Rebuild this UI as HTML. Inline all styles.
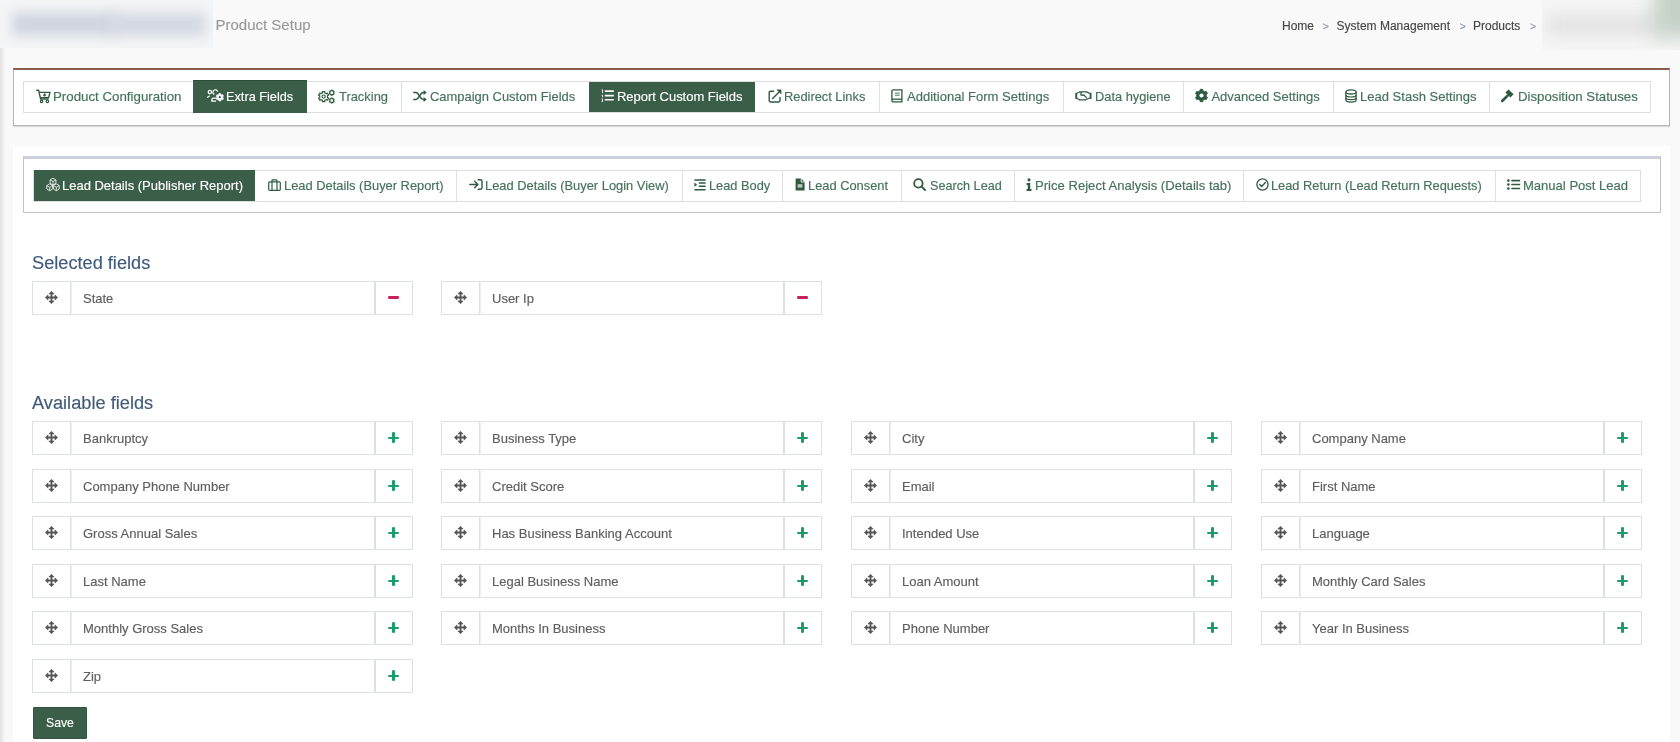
<!DOCTYPE html>
<html><head><meta charset="utf-8"><title>Product Setup</title>
<style>
html,body{margin:0;padding:0}
body{width:1680px;height:742px;overflow:hidden;position:relative;background:#f9f9f9;font-family:"Liberation Sans",sans-serif}
.t{position:absolute;white-space:nowrap;line-height:20px;-webkit-text-stroke:0.15px currentColor}
svg{overflow:visible}
</style></head><body>
<div id="root" style="position:absolute;left:0;top:0;width:1680px;height:742px;filter:blur(0.35px)">
<div style="position:absolute;left:0;top:0;width:6px;height:742px;background:linear-gradient(90deg,#e2e2e2 0,#e6e6e6 1.5px,#f2f2f2 3.5px,#f9f9f9 6px)"></div>
<div style="position:absolute;left:0;top:0;width:213px;height:48px;background:#f4f5f7;overflow:hidden"><div style="position:absolute;left:12px;top:12px;width:106px;height:24px;background:#d1d6de;filter:blur(6px)"></div><div style="position:absolute;left:112px;top:13px;width:94px;height:23px;background:#d4d9e1;filter:blur(6px)"></div></div>
<div class="t" style="left:215.5px;top:15.00px;font-size:15px;color:#9a9a9a;">Product Setup</div>
<div class="t" style="left:1282px;top:16.00px;font-size:12px;color:#474747;">Home</div>
<div class="t" style="left:1336.6px;top:16.00px;font-size:12px;color:#474747;">System Management</div>
<div class="t" style="left:1473px;top:16.00px;font-size:12px;color:#474747;">Products</div>
<div class="t" style="left:1322.8px;top:15.50px;font-size:10.5px;color:#8d9bb3;">&gt;</div>
<div class="t" style="left:1459.8px;top:15.50px;font-size:10.5px;color:#8d9bb3;">&gt;</div>
<div class="t" style="left:1530.1px;top:15.50px;font-size:10.5px;color:#8d9bb3;">&gt;</div>
<div style="position:absolute;left:1542px;top:0;width:138px;height:50px;background:#f6f6f6;overflow:hidden"><div style="position:absolute;left:4px;top:14px;width:118px;height:22px;background:#e3e3e3;filter:blur(8px)"></div><div style="position:absolute;left:112px;top:-25px;width:60px;height:62px;background:#c3d0c5;filter:blur(10px)"></div></div>
<div style="position:absolute;left:13px;top:68px;width:1655px;height:55px;background:#fff;border:1px solid #b7b7b7;border-top:2px solid #8c5b50;box-shadow:0 1px 1px rgba(0,0,0,0.12)"></div>
<div style="position:absolute;left:23px;top:81px;width:1626px;height:30px;border:1px solid #dedede;background:#fff"></div>
<div style="position:absolute;left:401px;top:82px;width:1px;height:30px;background:#e0e0e0"></div>
<div style="position:absolute;left:879px;top:82px;width:1px;height:30px;background:#e0e0e0"></div>
<div style="position:absolute;left:1063px;top:82px;width:1px;height:30px;background:#e0e0e0"></div>
<div style="position:absolute;left:1183px;top:82px;width:1px;height:30px;background:#e0e0e0"></div>
<div style="position:absolute;left:1333px;top:82px;width:1px;height:30px;background:#e0e0e0"></div>
<div style="position:absolute;left:1489px;top:82px;width:1px;height:30px;background:#e0e0e0"></div>
<div style="position:absolute;left:193px;top:80px;width:114px;height:33px;background:#3a5e48;box-shadow:inset 0 1px 0 #2c4f3a"></div>
<div style="position:absolute;left:589px;top:82px;width:166px;height:30px;background:#3a5e48"></div>
<svg style="position:absolute;left:36.2px;top:88.8px" width="15" height="14" viewBox="0 0 15 14" fill="none" stroke="none" color="#2f5a40"><path d="M0.8 1.2 H2.6 L4.6 10 H12.2" stroke="#2f5a40" stroke-width="1.4" stroke-linecap="round" stroke-linejoin="round"/><path d="M3.4 3.4 H14 L12.6 8.6 H4.5" stroke="#2f5a40" stroke-width="1.4" stroke-linejoin="round"/><circle cx="5.6" cy="12.4" r="1.2" stroke="#2f5a40" stroke-width="1.2"/><circle cx="11.4" cy="12.4" r="1.2" stroke="#2f5a40" stroke-width="1.2"/><path d="M8.6 4.6 V7.6 M7.1 6.1 H10.1" stroke="#2f5a40" stroke-width="1.3"/></svg>
<div class="t" style="left:53.4px;top:86.70px;font-size:13px;color:#44715a;transform:scaleX(1.022);transform-origin:0 0;">Product Configuration</div>
<svg style="position:absolute;left:206.5px;top:89.3px" width="17" height="13" viewBox="0 0 17 13" fill="none" stroke="none" color="#2f5a40"><circle cx="2.9" cy="3" r="1.7" stroke="#ffffff" stroke-width="1.2"/><path d="M7.4 5.4 A2.4 2.4 0 1 1 10.6 2.6" stroke="#ffffff" stroke-width="1.2"/><path d="M0.5 8.4 Q1.3 7.3 2.6 7" stroke="#ffffff" stroke-width="1.2" stroke-linecap="round"/><path d="M9 9.2 H6.4 Q4.9 9.2 4.9 10.7 V12.2 H9" stroke="#ffffff" stroke-width="1.3"/><path d="M11.35 5.69 L11.87 5.45 L11.79 4.43 L13.81 4.43 L13.73 5.45 L14.25 5.69 L14.71 6.02 L15.56 5.44 L16.57 7.19 L15.64 7.63 L15.70 8.20 L15.64 8.77 L16.57 9.21 L15.56 10.96 L14.71 10.38 L14.25 10.71 L13.73 10.95 L13.81 11.97 L11.79 11.97 L11.87 10.95 L11.35 10.71 L10.89 10.38 L10.04 10.96 L9.03 9.21 L9.96 8.77 L9.90 8.20 L9.96 7.63 L9.03 7.19 L10.04 5.44 L10.89 6.02 Z" fill="#ffffff" stroke="#ffffff" stroke-width="0.6" stroke-linejoin="round"/><circle cx="12.8" cy="8.2" r="1.1" fill="#3a5e48"/></svg>
<div class="t" style="left:226.0px;top:86.70px;font-size:13px;color:#fff;transform:scaleX(0.979);transform-origin:0 0;">Extra Fields</div>
<svg style="position:absolute;left:318.3px;top:89.6px" width="17" height="13" viewBox="0 0 17 13" fill="none" stroke="none" color="#2f5a40"><path d="M3.65 3.22 L4.47 2.87 L4.39 1.54 L6.81 1.54 L6.73 2.87 L7.55 3.22 L8.27 3.75 L9.37 3.02 L10.59 5.12 L9.40 5.71 L9.50 6.60 L9.40 7.49 L10.59 8.08 L9.37 10.18 L8.27 9.45 L7.55 9.98 L6.73 10.33 L6.81 11.66 L4.39 11.66 L4.47 10.33 L3.65 9.98 L2.93 9.45 L1.83 10.18 L0.61 8.08 L1.80 7.49 L1.70 6.60 L1.80 5.71 L0.61 5.12 L1.83 3.02 L2.93 3.75 Z" stroke="#2f5a40" stroke-width="1.2" stroke-linejoin="round"/><circle cx="5.6" cy="6.6" r="1.6" stroke="#2f5a40" stroke-width="1.1"/><path d="M12.85 1.05 L13.19 0.90 L13.15 0.29 L14.45 0.29 L14.41 0.90 L14.75 1.05 L15.05 1.27 L15.57 0.93 L16.21 2.05 L15.66 2.33 L15.70 2.70 L15.66 3.07 L16.21 3.35 L15.57 4.47 L15.05 4.13 L14.75 4.35 L14.41 4.50 L14.45 5.11 L13.15 5.11 L13.19 4.50 L12.85 4.35 L12.55 4.13 L12.03 4.47 L11.39 3.35 L11.94 3.07 L11.90 2.70 L11.94 2.33 L11.39 2.05 L12.03 0.93 L12.55 1.27 Z" stroke="#2f5a40" stroke-width="1.1" stroke-linejoin="round"/><path d="M12.85 8.85 L13.19 8.70 L13.15 8.09 L14.45 8.09 L14.41 8.70 L14.75 8.85 L15.05 9.07 L15.57 8.73 L16.21 9.85 L15.66 10.13 L15.70 10.50 L15.66 10.87 L16.21 11.15 L15.57 12.27 L15.05 11.93 L14.75 12.15 L14.41 12.30 L14.45 12.91 L13.15 12.91 L13.19 12.30 L12.85 12.15 L12.55 11.93 L12.03 12.27 L11.39 11.15 L11.94 10.87 L11.90 10.50 L11.94 10.13 L11.39 9.85 L12.03 8.73 L12.55 9.07 Z" stroke="#2f5a40" stroke-width="1.1" stroke-linejoin="round"/></svg>
<div class="t" style="left:338.6px;top:86.70px;font-size:13px;color:#44715a;transform:scaleX(0.992);transform-origin:0 0;">Tracking</div>
<svg style="position:absolute;left:412.6px;top:89.8px" width="14" height="12" viewBox="0 0 14 12" fill="none" stroke="none" color="#2f5a40"><path d="M0.8 2.5 H2.8 Q4.4 2.5 5.6 4.6 L7.4 7.4 Q8.6 9.4 10.6 9.4 H11.5" stroke="#2f5a40" stroke-width="1.5" stroke-linecap="round"/><path d="M0.8 9.4 H2.8 Q4.4 9.4 5.6 7.4 L7.4 4.6 Q8.6 2.5 10.6 2.5 H11.5" stroke="#2f5a40" stroke-width="1.5" stroke-linecap="round"/><path d="M10.6 0 L13.8 2.5 L10.6 5 Z M10.6 6.9 L13.8 9.4 L10.6 11.9 Z" fill="#2f5a40"/></svg>
<div class="t" style="left:429.7px;top:86.70px;font-size:13px;color:#44715a;transform:scaleX(0.995);transform-origin:0 0;">Campaign Custom Fields</div>
<svg style="position:absolute;left:601px;top:89.2px" width="13" height="13" viewBox="0 0 13 13" fill="none" stroke="none" color="#2f5a40"><path d="M0.6 0.8 H1.6 V4.2 M0.6 6.2 H1.6 V8.3 M0.6 10 H1.6 V12.6 H0.6" stroke="#ffffff" stroke-width="0.9"/><path d="M3.8 2.1 H12.8 M3.8 6.6 H12.8 M3.8 10.8 H12.8" stroke="#ffffff" stroke-width="1.6"/></svg>
<div class="t" style="left:616.5px;top:86.70px;font-size:13px;color:#fff;transform:scaleX(0.998);transform-origin:0 0;">Report Custom Fields</div>
<svg style="position:absolute;left:767.5px;top:88.8px" width="14" height="14" viewBox="0 0 14 14" fill="none" stroke="none" color="#2f5a40"><path d="M5.6 2.2 H2.6 Q1.2 2.2 1.2 3.6 V11.6 Q1.2 13 2.6 13 H10.6 Q12 13 12 11.6 V8.4" stroke="#2f5a40" stroke-width="1.4" stroke-linecap="round"/><path d="M4.6 9.4 L11.6 2.4" stroke="#2f5a40" stroke-width="1.4" stroke-linecap="round"/><path d="M8.4 0.6 H13.4 V5.6 Z" fill="#2f5a40"/></svg>
<div class="t" style="left:784.1px;top:86.70px;font-size:13px;color:#44715a;transform:scaleX(0.987);transform-origin:0 0;">Redirect Links</div>
<svg style="position:absolute;left:891.3px;top:88.9px" width="12" height="14" viewBox="0 0 12 14" fill="none" stroke="none" color="#2f5a40"><path d="M2.2 0.9 H10.9 V12.9 H2.2 Q0.9 12.9 0.9 11.6 V2.2 Q0.9 0.9 2.2 0.9 Z" stroke="#2f5a40" stroke-width="1.3"/><path d="M0.9 10.2 H10.9" stroke="#2f5a40" stroke-width="1.3"/><path d="M3.9 4.1 H8.7 M3.9 6.2 H8.7" stroke="#2f5a40" stroke-width="0.85"/></svg>
<div class="t" style="left:907.1px;top:86.70px;font-size:13px;color:#44715a;transform:scaleX(1.004);transform-origin:0 0;">Additional Form Settings</div>
<svg style="position:absolute;left:1074.6px;top:90.8px" width="17" height="10" viewBox="0 0 17 10" fill="none" stroke="none" color="#2f5a40"><path d="M0.3 1.8 H2.2 V8 H0.3 Z M14.6 1.8 H16.5 V8 H14.6 Z" fill="#2f5a40"/><path d="M2.2 2.3 L4.8 0.8 H11.6 L14.6 2.3 M2.2 7.5 L4.6 8.9 H10.2 L14.6 7" stroke="#2f5a40" stroke-width="1.3" stroke-linejoin="round"/><path d="M6.2 1 L5.9 3.9 Q7.2 4.6 8.6 3.8 L11.8 6.9" stroke="#2f5a40" stroke-width="1.3" stroke-linejoin="round"/></svg>
<div class="t" style="left:1094.6px;top:86.70px;font-size:13px;color:#44715a;transform:scaleX(0.987);transform-origin:0 0;">Data hygiene</div>
<svg style="position:absolute;left:1195.2px;top:89.3px" width="13" height="13" viewBox="0 0 13 13" fill="none" stroke="none" color="#2f5a40"><path d="M4.05 2.26 L5.17 1.78 L5.13 0.35 L7.87 0.35 L7.83 1.78 L8.95 2.26 L9.92 2.99 L11.14 2.24 L12.51 4.62 L11.25 5.29 L11.40 6.50 L11.25 7.71 L12.51 8.38 L11.14 10.76 L9.92 10.01 L8.95 10.74 L7.83 11.22 L7.87 12.65 L5.13 12.65 L5.17 11.22 L4.05 10.74 L3.08 10.01 L1.86 10.76 L0.49 8.38 L1.75 7.71 L1.60 6.50 L1.75 5.29 L0.49 4.62 L1.86 2.24 L3.08 2.99 Z" fill="#2f5a40" stroke="#2f5a40" stroke-width="0.9" stroke-linejoin="round"/><circle cx="6.5" cy="6.5" r="2.1" fill="#fff"/></svg>
<div class="t" style="left:1211.4px;top:86.70px;font-size:13px;color:#44715a;">Advanced Settings</div>
<svg style="position:absolute;left:1345.2px;top:88.9px" width="12" height="14" viewBox="0 0 12 14" fill="none" stroke="none" color="#2f5a40"><ellipse cx="6" cy="2.9" rx="5.1" ry="2.1" stroke="#2f5a40" stroke-width="1.3"/><path d="M0.9 2.9 V11 Q0.9 13.1 6 13.1 Q11.1 13.1 11.1 11 V2.9" stroke="#2f5a40" stroke-width="1.3"/><path d="M0.9 6 Q0.9 8 6 8 Q11.1 8 11.1 6 M0.9 8.7 Q0.9 10.6 6 10.6 Q11.1 10.6 11.1 8.7" stroke="#2f5a40" stroke-width="1.2"/></svg>
<div class="t" style="left:1359.6px;top:86.70px;font-size:13px;color:#44715a;transform:scaleX(1.002);transform-origin:0 0;">Lead Stash Settings</div>
<svg style="position:absolute;left:1501.3px;top:89.2px" width="13" height="13" viewBox="0 0 13 13" fill="none" stroke="none" color="#2f5a40"><path d="M4.4 3.6 L7.6 0.4 L9.6 2.4 L12.6 5.3 L9.4 8.6 L6.4 5.6 Z" fill="#2f5a40"/><path d="M1.2 12 L6.6 6.6" stroke="#2f5a40" stroke-width="2.6" stroke-linecap="round"/></svg>
<div class="t" style="left:1517.6px;top:86.70px;font-size:13px;color:#44715a;transform:scaleX(1.017);transform-origin:0 0;">Disposition Statuses</div>
<div style="position:absolute;left:13px;top:146px;width:1657px;height:596px;background:#fff"></div>
<div style="position:absolute;left:23px;top:156px;width:1636px;height:53px;background:#fff;border:1px solid #c3c3c3;border-top:3px solid #cbd2dd"></div>
<div style="position:absolute;left:33px;top:170px;width:1606px;height:30px;border:1px solid #dedede;background:#fff"></div>
<div style="position:absolute;left:456px;top:171px;width:1px;height:30px;background:#e0e0e0"></div>
<div style="position:absolute;left:682px;top:171px;width:1px;height:30px;background:#e0e0e0"></div>
<div style="position:absolute;left:782px;top:171px;width:1px;height:30px;background:#e0e0e0"></div>
<div style="position:absolute;left:901px;top:171px;width:1px;height:30px;background:#e0e0e0"></div>
<div style="position:absolute;left:1014px;top:171px;width:1px;height:30px;background:#e0e0e0"></div>
<div style="position:absolute;left:1243px;top:171px;width:1px;height:30px;background:#e0e0e0"></div>
<div style="position:absolute;left:1495px;top:171px;width:1px;height:30px;background:#e0e0e0"></div>
<div style="position:absolute;left:34px;top:170px;width:221px;height:31px;background:#3a5e48"></div>
<svg style="position:absolute;left:45.6px;top:178px" width="14" height="13" viewBox="0 0 14 13" fill="none" stroke="none" color="#2f5a40"><path d="M7 0.20000000000000018 L9.94 1.90 L9.94 5.30 L7 7.0 L4.06 5.30 L4.06 1.90 Z M4.06 1.90 L7 3.6 L9.94 1.90 M7 3.6 V7.0" stroke="#ffffff" stroke-width="0.8" stroke-linejoin="round"/><path d="M3.7 5.9 L6.64 7.60 L6.64 11.00 L3.7 12.700000000000001 L0.76 11.00 L0.76 7.60 Z M0.76 7.60 L3.7 9.3 L6.64 7.60 M3.7 9.3 V12.700000000000001" stroke="#ffffff" stroke-width="0.8" stroke-linejoin="round"/><path d="M10.3 5.9 L13.24 7.60 L13.24 11.00 L10.3 12.700000000000001 L7.36 11.00 L7.36 7.60 Z M7.36 7.60 L10.3 9.3 L13.24 7.60 M10.3 9.3 V12.700000000000001" stroke="#ffffff" stroke-width="0.8" stroke-linejoin="round"/></svg>
<div class="t" style="left:61.7px;top:175.80px;font-size:13px;color:#fff;transform:scaleX(0.998);transform-origin:0 0;">Lead Details (Publisher Report)</div>
<svg style="position:absolute;left:268px;top:178.6px" width="13" height="12" viewBox="0 0 13 12" fill="none" stroke="none" color="#2f5a40"><rect x="0.7" y="2.9" width="11.6" height="8.5" rx="1.2" stroke="#2f5a40" stroke-width="1.2"/><path d="M4 11.4 V1.6 Q4 0.8 4.8 0.8 H8.2 Q9 0.8 9 1.6 V11.4" stroke="#2f5a40" stroke-width="1.2"/></svg>
<div class="t" style="left:284.4px;top:175.80px;font-size:13px;color:#44715a;transform:scaleX(0.99);transform-origin:0 0;">Lead Details (Buyer Report)</div>
<svg style="position:absolute;left:468.5px;top:178.9px" width="14" height="11" viewBox="0 0 14 11" fill="none" stroke="none" color="#2f5a40"><path d="M0.8 5.5 H8.6 M5.6 2.2 L8.9 5.5 L5.6 8.8" stroke="#2f5a40" stroke-width="1.4" stroke-linecap="round" stroke-linejoin="round"/><path d="M9.2 0.8 H11.6 Q13 0.8 13 2.2 V8.8 Q13 10.2 11.6 10.2 H9.2" stroke="#2f5a40" stroke-width="1.4" stroke-linecap="round"/></svg>
<div class="t" style="left:485.0px;top:175.80px;font-size:13px;color:#44715a;transform:scaleX(0.991);transform-origin:0 0;">Lead Details (Buyer Login View)</div>
<svg style="position:absolute;left:693.9px;top:178.7px" width="12" height="12" viewBox="0 0 12 12" fill="none" stroke="none" color="#2f5a40"><path d="M0.4 1 H11.6 M4.8 4.1 H11.6 M4.8 7.2 H11.6 M0.4 10.8 H11.6" stroke="#2f5a40" stroke-width="1.5"/><path d="M0.4 3.6 L3.2 5.7 L0.4 7.8 Z" fill="#2f5a40"/></svg>
<div class="t" style="left:708.5px;top:175.80px;font-size:13px;color:#44715a;transform:scaleX(0.984);transform-origin:0 0;">Lead Body</div>
<svg style="position:absolute;left:794.7px;top:178px" width="10" height="13" viewBox="0 0 10 13" fill="none" stroke="none" color="#2f5a40"><path d="M0.6 0.6 H6.2 L9.6 4 V12.6 H0.6 Z" fill="#2f5a40"/><path d="M6.2 0.6 V4 H9.6" stroke="#fff" stroke-width="0.9"/><rect x="2.6" y="6.2" width="4.8" height="3.4" fill="#b9c9bf"/></svg>
<div class="t" style="left:807.7px;top:175.80px;font-size:13px;color:#44715a;transform:scaleX(0.988);transform-origin:0 0;">Lead Consent</div>
<svg style="position:absolute;left:913.3px;top:178px" width="13" height="13" viewBox="0 0 13 13" fill="none" stroke="none" color="#2f5a40"><circle cx="5.4" cy="5.4" r="4.2" stroke="#2f5a40" stroke-width="1.8"/><path d="M8.4 8.4 L12 12" stroke="#2f5a40" stroke-width="1.9" stroke-linecap="round"/></svg>
<div class="t" style="left:929.6px;top:175.80px;font-size:13px;color:#44715a;transform:scaleX(0.973);transform-origin:0 0;">Search Lead</div>
<svg style="position:absolute;left:1026.4px;top:177.8px" width="6" height="13" viewBox="0 0 6 13" fill="none" stroke="none" color="#2f5a40"><circle cx="3" cy="1.8" r="1.6" fill="#2f5a40"/><path d="M0.6 5 H4.2 V11 H5.4 V13 H0.6 V11 H1.8 V7 H0.6 Z" fill="#2f5a40"/></svg>
<div class="t" style="left:1034.9px;top:175.80px;font-size:13px;color:#44715a;transform:scaleX(1.007);transform-origin:0 0;">Price Reject Analysis (Details tab)</div>
<svg style="position:absolute;left:1255.8px;top:178px" width="13" height="13" viewBox="0 0 13 13" fill="none" stroke="none" color="#2f5a40"><circle cx="6.5" cy="6.5" r="5.6" stroke="#2f5a40" stroke-width="1.3"/><path d="M3.7 6.6 L5.6 8.5 L9.4 4.6" stroke="#2f5a40" stroke-width="1.4" stroke-linecap="round" stroke-linejoin="round"/></svg>
<div class="t" style="left:1271.4px;top:175.80px;font-size:13px;color:#44715a;transform:scaleX(0.985);transform-origin:0 0;">Lead Return (Lead Return Requests)</div>
<svg style="position:absolute;left:1506.7px;top:178.9px" width="13" height="11" viewBox="0 0 13 11" fill="none" stroke="none" color="#2f5a40"><circle cx="1.4" cy="1.6" r="1.3" fill="#2f5a40"/><circle cx="1.4" cy="5.5" r="1.3" fill="#2f5a40"/><circle cx="1.4" cy="9.5" r="1.3" fill="#2f5a40"/><path d="M5 1.6 H12.4 M5 5.5 H12.4 M5 9.5 H12.4" stroke="#2f5a40" stroke-width="1.7" stroke-linecap="round"/></svg>
<div class="t" style="left:1522.9px;top:175.80px;font-size:13px;color:#44715a;transform:scaleX(1.003);transform-origin:0 0;">Manual Post Lead</div>
<div class="t" style="left:32.4px;top:253.00px;font-size:18px;color:#3f5a7c;transform:scaleX(1.01);transform-origin:0 0;">Selected fields</div>
<div class="t" style="left:32.4px;top:392.80px;font-size:18px;color:#3f5a7c;transform:scaleX(1.012);transform-origin:0 0;">Available fields</div>
<div style="position:absolute;left:32px;top:281px;width:379px;height:32px;border:1px solid #dcdfe6;background:#fff"></div>
<div style="position:absolute;left:70px;top:281px;width:1px;height:34px;background:#dcdfe6"></div>
<div style="position:absolute;left:71px;top:281px;width:1px;height:34px;background:#eceef2"></div>
<div style="position:absolute;left:374px;top:281px;width:1px;height:34px;background:#dcdfe6"></div>
<div style="position:absolute;left:375px;top:281px;width:1px;height:34px;background:#dcdfe6"></div>
<svg style="position:absolute;left:45px;top:291px" width="13" height="13" viewBox="0 0 13 13" fill="none" stroke="none" color="#2f5a40"><path d="M6.5 0.3 L9.1 3 H3.9 Z M6.5 12.7 L9.1 10 H3.9 Z M0.3 6.5 L3 3.9 V9.1 Z M12.7 6.5 L10 3.9 V9.1 Z" fill="#555555" stroke="#555555" stroke-width="0.6" stroke-linejoin="round"/><path d="M6.5 2.5 V10.5 M2.5 6.5 H10.5" stroke="#555555" stroke-width="1.8"/></svg>
<div class="t" style="left:83px;top:289.40px;font-size:13px;color:#5e5e5e;">State</div>
<div style="position:absolute;left:387.6px;top:296.3px;width:11.6px;height:2.6px;background:#c8215e;border-radius:1.3px"></div>
<div style="position:absolute;left:441px;top:281px;width:379px;height:32px;border:1px solid #dcdfe6;background:#fff"></div>
<div style="position:absolute;left:479px;top:281px;width:1px;height:34px;background:#dcdfe6"></div>
<div style="position:absolute;left:480px;top:281px;width:1px;height:34px;background:#eceef2"></div>
<div style="position:absolute;left:783px;top:281px;width:1px;height:34px;background:#dcdfe6"></div>
<div style="position:absolute;left:784px;top:281px;width:1px;height:34px;background:#dcdfe6"></div>
<svg style="position:absolute;left:454px;top:291px" width="13" height="13" viewBox="0 0 13 13" fill="none" stroke="none" color="#2f5a40"><path d="M6.5 0.3 L9.1 3 H3.9 Z M6.5 12.7 L9.1 10 H3.9 Z M0.3 6.5 L3 3.9 V9.1 Z M12.7 6.5 L10 3.9 V9.1 Z" fill="#555555" stroke="#555555" stroke-width="0.6" stroke-linejoin="round"/><path d="M6.5 2.5 V10.5 M2.5 6.5 H10.5" stroke="#555555" stroke-width="1.8"/></svg>
<div class="t" style="left:492px;top:289.40px;font-size:13px;color:#5e5e5e;">User Ip</div>
<div style="position:absolute;left:796.6px;top:296.3px;width:11.6px;height:2.6px;background:#c8215e;border-radius:1.3px"></div>
<div style="position:absolute;left:32px;top:421px;width:379px;height:32px;border:1px solid #dcdfe6;background:#fff"></div>
<div style="position:absolute;left:70px;top:421px;width:1px;height:34px;background:#dcdfe6"></div>
<div style="position:absolute;left:71px;top:421px;width:1px;height:34px;background:#eceef2"></div>
<div style="position:absolute;left:374px;top:421px;width:1px;height:34px;background:#dcdfe6"></div>
<div style="position:absolute;left:375px;top:421px;width:1px;height:34px;background:#dcdfe6"></div>
<svg style="position:absolute;left:45px;top:431px" width="13" height="13" viewBox="0 0 13 13" fill="none" stroke="none" color="#2f5a40"><path d="M6.5 0.3 L9.1 3 H3.9 Z M6.5 12.7 L9.1 10 H3.9 Z M0.3 6.5 L3 3.9 V9.1 Z M12.7 6.5 L10 3.9 V9.1 Z" fill="#555555" stroke="#555555" stroke-width="0.6" stroke-linejoin="round"/><path d="M6.5 2.5 V10.5 M2.5 6.5 H10.5" stroke="#555555" stroke-width="1.8"/></svg>
<div class="t" style="left:83px;top:429.40px;font-size:13px;color:#5e5e5e;">Bankruptcy</div>
<div style="position:absolute;left:387.7px;top:436.5px;width:11.8px;height:2.4px;background:#1c9c6c;border-radius:1.2px"></div>
<div style="position:absolute;left:392.4px;top:431.8px;width:2.4px;height:11.6px;background:#1c9c6c;border-radius:1.2px"></div>
<div style="position:absolute;left:441px;top:421px;width:379px;height:32px;border:1px solid #dcdfe6;background:#fff"></div>
<div style="position:absolute;left:479px;top:421px;width:1px;height:34px;background:#dcdfe6"></div>
<div style="position:absolute;left:480px;top:421px;width:1px;height:34px;background:#eceef2"></div>
<div style="position:absolute;left:783px;top:421px;width:1px;height:34px;background:#dcdfe6"></div>
<div style="position:absolute;left:784px;top:421px;width:1px;height:34px;background:#dcdfe6"></div>
<svg style="position:absolute;left:454px;top:431px" width="13" height="13" viewBox="0 0 13 13" fill="none" stroke="none" color="#2f5a40"><path d="M6.5 0.3 L9.1 3 H3.9 Z M6.5 12.7 L9.1 10 H3.9 Z M0.3 6.5 L3 3.9 V9.1 Z M12.7 6.5 L10 3.9 V9.1 Z" fill="#555555" stroke="#555555" stroke-width="0.6" stroke-linejoin="round"/><path d="M6.5 2.5 V10.5 M2.5 6.5 H10.5" stroke="#555555" stroke-width="1.8"/></svg>
<div class="t" style="left:492px;top:429.40px;font-size:13px;color:#5e5e5e;">Business Type</div>
<div style="position:absolute;left:796.7px;top:436.5px;width:11.8px;height:2.4px;background:#1c9c6c;border-radius:1.2px"></div>
<div style="position:absolute;left:801.4px;top:431.8px;width:2.4px;height:11.6px;background:#1c9c6c;border-radius:1.2px"></div>
<div style="position:absolute;left:851px;top:421px;width:379px;height:32px;border:1px solid #dcdfe6;background:#fff"></div>
<div style="position:absolute;left:889px;top:421px;width:1px;height:34px;background:#dcdfe6"></div>
<div style="position:absolute;left:890px;top:421px;width:1px;height:34px;background:#eceef2"></div>
<div style="position:absolute;left:1193px;top:421px;width:1px;height:34px;background:#dcdfe6"></div>
<div style="position:absolute;left:1194px;top:421px;width:1px;height:34px;background:#dcdfe6"></div>
<svg style="position:absolute;left:864px;top:431px" width="13" height="13" viewBox="0 0 13 13" fill="none" stroke="none" color="#2f5a40"><path d="M6.5 0.3 L9.1 3 H3.9 Z M6.5 12.7 L9.1 10 H3.9 Z M0.3 6.5 L3 3.9 V9.1 Z M12.7 6.5 L10 3.9 V9.1 Z" fill="#555555" stroke="#555555" stroke-width="0.6" stroke-linejoin="round"/><path d="M6.5 2.5 V10.5 M2.5 6.5 H10.5" stroke="#555555" stroke-width="1.8"/></svg>
<div class="t" style="left:902px;top:429.40px;font-size:13px;color:#5e5e5e;">City</div>
<div style="position:absolute;left:1206.7px;top:436.5px;width:11.8px;height:2.4px;background:#1c9c6c;border-radius:1.2px"></div>
<div style="position:absolute;left:1211.4px;top:431.8px;width:2.4px;height:11.6px;background:#1c9c6c;border-radius:1.2px"></div>
<div style="position:absolute;left:1261px;top:421px;width:379px;height:32px;border:1px solid #dcdfe6;background:#fff"></div>
<div style="position:absolute;left:1299px;top:421px;width:1px;height:34px;background:#dcdfe6"></div>
<div style="position:absolute;left:1300px;top:421px;width:1px;height:34px;background:#eceef2"></div>
<div style="position:absolute;left:1603px;top:421px;width:1px;height:34px;background:#dcdfe6"></div>
<div style="position:absolute;left:1604px;top:421px;width:1px;height:34px;background:#dcdfe6"></div>
<svg style="position:absolute;left:1274px;top:431px" width="13" height="13" viewBox="0 0 13 13" fill="none" stroke="none" color="#2f5a40"><path d="M6.5 0.3 L9.1 3 H3.9 Z M6.5 12.7 L9.1 10 H3.9 Z M0.3 6.5 L3 3.9 V9.1 Z M12.7 6.5 L10 3.9 V9.1 Z" fill="#555555" stroke="#555555" stroke-width="0.6" stroke-linejoin="round"/><path d="M6.5 2.5 V10.5 M2.5 6.5 H10.5" stroke="#555555" stroke-width="1.8"/></svg>
<div class="t" style="left:1312px;top:429.40px;font-size:13px;color:#5e5e5e;">Company Name</div>
<div style="position:absolute;left:1616.7px;top:436.5px;width:11.8px;height:2.4px;background:#1c9c6c;border-radius:1.2px"></div>
<div style="position:absolute;left:1621.4px;top:431.8px;width:2.4px;height:11.6px;background:#1c9c6c;border-radius:1.2px"></div>
<div style="position:absolute;left:32px;top:469px;width:379px;height:32px;border:1px solid #dcdfe6;background:#fff"></div>
<div style="position:absolute;left:70px;top:469px;width:1px;height:34px;background:#dcdfe6"></div>
<div style="position:absolute;left:71px;top:469px;width:1px;height:34px;background:#eceef2"></div>
<div style="position:absolute;left:374px;top:469px;width:1px;height:34px;background:#dcdfe6"></div>
<div style="position:absolute;left:375px;top:469px;width:1px;height:34px;background:#dcdfe6"></div>
<svg style="position:absolute;left:45px;top:479px" width="13" height="13" viewBox="0 0 13 13" fill="none" stroke="none" color="#2f5a40"><path d="M6.5 0.3 L9.1 3 H3.9 Z M6.5 12.7 L9.1 10 H3.9 Z M0.3 6.5 L3 3.9 V9.1 Z M12.7 6.5 L10 3.9 V9.1 Z" fill="#555555" stroke="#555555" stroke-width="0.6" stroke-linejoin="round"/><path d="M6.5 2.5 V10.5 M2.5 6.5 H10.5" stroke="#555555" stroke-width="1.8"/></svg>
<div class="t" style="left:83px;top:477.40px;font-size:13px;color:#5e5e5e;">Company Phone Number</div>
<div style="position:absolute;left:387.7px;top:484.5px;width:11.8px;height:2.4px;background:#1c9c6c;border-radius:1.2px"></div>
<div style="position:absolute;left:392.4px;top:479.8px;width:2.4px;height:11.6px;background:#1c9c6c;border-radius:1.2px"></div>
<div style="position:absolute;left:441px;top:469px;width:379px;height:32px;border:1px solid #dcdfe6;background:#fff"></div>
<div style="position:absolute;left:479px;top:469px;width:1px;height:34px;background:#dcdfe6"></div>
<div style="position:absolute;left:480px;top:469px;width:1px;height:34px;background:#eceef2"></div>
<div style="position:absolute;left:783px;top:469px;width:1px;height:34px;background:#dcdfe6"></div>
<div style="position:absolute;left:784px;top:469px;width:1px;height:34px;background:#dcdfe6"></div>
<svg style="position:absolute;left:454px;top:479px" width="13" height="13" viewBox="0 0 13 13" fill="none" stroke="none" color="#2f5a40"><path d="M6.5 0.3 L9.1 3 H3.9 Z M6.5 12.7 L9.1 10 H3.9 Z M0.3 6.5 L3 3.9 V9.1 Z M12.7 6.5 L10 3.9 V9.1 Z" fill="#555555" stroke="#555555" stroke-width="0.6" stroke-linejoin="round"/><path d="M6.5 2.5 V10.5 M2.5 6.5 H10.5" stroke="#555555" stroke-width="1.8"/></svg>
<div class="t" style="left:492px;top:477.40px;font-size:13px;color:#5e5e5e;">Credit Score</div>
<div style="position:absolute;left:796.7px;top:484.5px;width:11.8px;height:2.4px;background:#1c9c6c;border-radius:1.2px"></div>
<div style="position:absolute;left:801.4px;top:479.8px;width:2.4px;height:11.6px;background:#1c9c6c;border-radius:1.2px"></div>
<div style="position:absolute;left:851px;top:469px;width:379px;height:32px;border:1px solid #dcdfe6;background:#fff"></div>
<div style="position:absolute;left:889px;top:469px;width:1px;height:34px;background:#dcdfe6"></div>
<div style="position:absolute;left:890px;top:469px;width:1px;height:34px;background:#eceef2"></div>
<div style="position:absolute;left:1193px;top:469px;width:1px;height:34px;background:#dcdfe6"></div>
<div style="position:absolute;left:1194px;top:469px;width:1px;height:34px;background:#dcdfe6"></div>
<svg style="position:absolute;left:864px;top:479px" width="13" height="13" viewBox="0 0 13 13" fill="none" stroke="none" color="#2f5a40"><path d="M6.5 0.3 L9.1 3 H3.9 Z M6.5 12.7 L9.1 10 H3.9 Z M0.3 6.5 L3 3.9 V9.1 Z M12.7 6.5 L10 3.9 V9.1 Z" fill="#555555" stroke="#555555" stroke-width="0.6" stroke-linejoin="round"/><path d="M6.5 2.5 V10.5 M2.5 6.5 H10.5" stroke="#555555" stroke-width="1.8"/></svg>
<div class="t" style="left:902px;top:477.40px;font-size:13px;color:#5e5e5e;">Email</div>
<div style="position:absolute;left:1206.7px;top:484.5px;width:11.8px;height:2.4px;background:#1c9c6c;border-radius:1.2px"></div>
<div style="position:absolute;left:1211.4px;top:479.8px;width:2.4px;height:11.6px;background:#1c9c6c;border-radius:1.2px"></div>
<div style="position:absolute;left:1261px;top:469px;width:379px;height:32px;border:1px solid #dcdfe6;background:#fff"></div>
<div style="position:absolute;left:1299px;top:469px;width:1px;height:34px;background:#dcdfe6"></div>
<div style="position:absolute;left:1300px;top:469px;width:1px;height:34px;background:#eceef2"></div>
<div style="position:absolute;left:1603px;top:469px;width:1px;height:34px;background:#dcdfe6"></div>
<div style="position:absolute;left:1604px;top:469px;width:1px;height:34px;background:#dcdfe6"></div>
<svg style="position:absolute;left:1274px;top:479px" width="13" height="13" viewBox="0 0 13 13" fill="none" stroke="none" color="#2f5a40"><path d="M6.5 0.3 L9.1 3 H3.9 Z M6.5 12.7 L9.1 10 H3.9 Z M0.3 6.5 L3 3.9 V9.1 Z M12.7 6.5 L10 3.9 V9.1 Z" fill="#555555" stroke="#555555" stroke-width="0.6" stroke-linejoin="round"/><path d="M6.5 2.5 V10.5 M2.5 6.5 H10.5" stroke="#555555" stroke-width="1.8"/></svg>
<div class="t" style="left:1312px;top:477.40px;font-size:13px;color:#5e5e5e;">First Name</div>
<div style="position:absolute;left:1616.7px;top:484.5px;width:11.8px;height:2.4px;background:#1c9c6c;border-radius:1.2px"></div>
<div style="position:absolute;left:1621.4px;top:479.8px;width:2.4px;height:11.6px;background:#1c9c6c;border-radius:1.2px"></div>
<div style="position:absolute;left:32px;top:516px;width:379px;height:32px;border:1px solid #dcdfe6;background:#fff"></div>
<div style="position:absolute;left:70px;top:516px;width:1px;height:34px;background:#dcdfe6"></div>
<div style="position:absolute;left:71px;top:516px;width:1px;height:34px;background:#eceef2"></div>
<div style="position:absolute;left:374px;top:516px;width:1px;height:34px;background:#dcdfe6"></div>
<div style="position:absolute;left:375px;top:516px;width:1px;height:34px;background:#dcdfe6"></div>
<svg style="position:absolute;left:45px;top:526px" width="13" height="13" viewBox="0 0 13 13" fill="none" stroke="none" color="#2f5a40"><path d="M6.5 0.3 L9.1 3 H3.9 Z M6.5 12.7 L9.1 10 H3.9 Z M0.3 6.5 L3 3.9 V9.1 Z M12.7 6.5 L10 3.9 V9.1 Z" fill="#555555" stroke="#555555" stroke-width="0.6" stroke-linejoin="round"/><path d="M6.5 2.5 V10.5 M2.5 6.5 H10.5" stroke="#555555" stroke-width="1.8"/></svg>
<div class="t" style="left:83px;top:524.40px;font-size:13px;color:#5e5e5e;">Gross Annual Sales</div>
<div style="position:absolute;left:387.7px;top:531.5px;width:11.8px;height:2.4px;background:#1c9c6c;border-radius:1.2px"></div>
<div style="position:absolute;left:392.4px;top:526.8px;width:2.4px;height:11.6px;background:#1c9c6c;border-radius:1.2px"></div>
<div style="position:absolute;left:441px;top:516px;width:379px;height:32px;border:1px solid #dcdfe6;background:#fff"></div>
<div style="position:absolute;left:479px;top:516px;width:1px;height:34px;background:#dcdfe6"></div>
<div style="position:absolute;left:480px;top:516px;width:1px;height:34px;background:#eceef2"></div>
<div style="position:absolute;left:783px;top:516px;width:1px;height:34px;background:#dcdfe6"></div>
<div style="position:absolute;left:784px;top:516px;width:1px;height:34px;background:#dcdfe6"></div>
<svg style="position:absolute;left:454px;top:526px" width="13" height="13" viewBox="0 0 13 13" fill="none" stroke="none" color="#2f5a40"><path d="M6.5 0.3 L9.1 3 H3.9 Z M6.5 12.7 L9.1 10 H3.9 Z M0.3 6.5 L3 3.9 V9.1 Z M12.7 6.5 L10 3.9 V9.1 Z" fill="#555555" stroke="#555555" stroke-width="0.6" stroke-linejoin="round"/><path d="M6.5 2.5 V10.5 M2.5 6.5 H10.5" stroke="#555555" stroke-width="1.8"/></svg>
<div class="t" style="left:492px;top:524.40px;font-size:13px;color:#5e5e5e;">Has Business Banking Account</div>
<div style="position:absolute;left:796.7px;top:531.5px;width:11.8px;height:2.4px;background:#1c9c6c;border-radius:1.2px"></div>
<div style="position:absolute;left:801.4px;top:526.8px;width:2.4px;height:11.6px;background:#1c9c6c;border-radius:1.2px"></div>
<div style="position:absolute;left:851px;top:516px;width:379px;height:32px;border:1px solid #dcdfe6;background:#fff"></div>
<div style="position:absolute;left:889px;top:516px;width:1px;height:34px;background:#dcdfe6"></div>
<div style="position:absolute;left:890px;top:516px;width:1px;height:34px;background:#eceef2"></div>
<div style="position:absolute;left:1193px;top:516px;width:1px;height:34px;background:#dcdfe6"></div>
<div style="position:absolute;left:1194px;top:516px;width:1px;height:34px;background:#dcdfe6"></div>
<svg style="position:absolute;left:864px;top:526px" width="13" height="13" viewBox="0 0 13 13" fill="none" stroke="none" color="#2f5a40"><path d="M6.5 0.3 L9.1 3 H3.9 Z M6.5 12.7 L9.1 10 H3.9 Z M0.3 6.5 L3 3.9 V9.1 Z M12.7 6.5 L10 3.9 V9.1 Z" fill="#555555" stroke="#555555" stroke-width="0.6" stroke-linejoin="round"/><path d="M6.5 2.5 V10.5 M2.5 6.5 H10.5" stroke="#555555" stroke-width="1.8"/></svg>
<div class="t" style="left:902px;top:524.40px;font-size:13px;color:#5e5e5e;">Intended Use</div>
<div style="position:absolute;left:1206.7px;top:531.5px;width:11.8px;height:2.4px;background:#1c9c6c;border-radius:1.2px"></div>
<div style="position:absolute;left:1211.4px;top:526.8px;width:2.4px;height:11.6px;background:#1c9c6c;border-radius:1.2px"></div>
<div style="position:absolute;left:1261px;top:516px;width:379px;height:32px;border:1px solid #dcdfe6;background:#fff"></div>
<div style="position:absolute;left:1299px;top:516px;width:1px;height:34px;background:#dcdfe6"></div>
<div style="position:absolute;left:1300px;top:516px;width:1px;height:34px;background:#eceef2"></div>
<div style="position:absolute;left:1603px;top:516px;width:1px;height:34px;background:#dcdfe6"></div>
<div style="position:absolute;left:1604px;top:516px;width:1px;height:34px;background:#dcdfe6"></div>
<svg style="position:absolute;left:1274px;top:526px" width="13" height="13" viewBox="0 0 13 13" fill="none" stroke="none" color="#2f5a40"><path d="M6.5 0.3 L9.1 3 H3.9 Z M6.5 12.7 L9.1 10 H3.9 Z M0.3 6.5 L3 3.9 V9.1 Z M12.7 6.5 L10 3.9 V9.1 Z" fill="#555555" stroke="#555555" stroke-width="0.6" stroke-linejoin="round"/><path d="M6.5 2.5 V10.5 M2.5 6.5 H10.5" stroke="#555555" stroke-width="1.8"/></svg>
<div class="t" style="left:1312px;top:524.40px;font-size:13px;color:#5e5e5e;">Language</div>
<div style="position:absolute;left:1616.7px;top:531.5px;width:11.8px;height:2.4px;background:#1c9c6c;border-radius:1.2px"></div>
<div style="position:absolute;left:1621.4px;top:526.8px;width:2.4px;height:11.6px;background:#1c9c6c;border-radius:1.2px"></div>
<div style="position:absolute;left:32px;top:564px;width:379px;height:32px;border:1px solid #dcdfe6;background:#fff"></div>
<div style="position:absolute;left:70px;top:564px;width:1px;height:34px;background:#dcdfe6"></div>
<div style="position:absolute;left:71px;top:564px;width:1px;height:34px;background:#eceef2"></div>
<div style="position:absolute;left:374px;top:564px;width:1px;height:34px;background:#dcdfe6"></div>
<div style="position:absolute;left:375px;top:564px;width:1px;height:34px;background:#dcdfe6"></div>
<svg style="position:absolute;left:45px;top:574px" width="13" height="13" viewBox="0 0 13 13" fill="none" stroke="none" color="#2f5a40"><path d="M6.5 0.3 L9.1 3 H3.9 Z M6.5 12.7 L9.1 10 H3.9 Z M0.3 6.5 L3 3.9 V9.1 Z M12.7 6.5 L10 3.9 V9.1 Z" fill="#555555" stroke="#555555" stroke-width="0.6" stroke-linejoin="round"/><path d="M6.5 2.5 V10.5 M2.5 6.5 H10.5" stroke="#555555" stroke-width="1.8"/></svg>
<div class="t" style="left:83px;top:572.40px;font-size:13px;color:#5e5e5e;">Last Name</div>
<div style="position:absolute;left:387.7px;top:579.5px;width:11.8px;height:2.4px;background:#1c9c6c;border-radius:1.2px"></div>
<div style="position:absolute;left:392.4px;top:574.8px;width:2.4px;height:11.6px;background:#1c9c6c;border-radius:1.2px"></div>
<div style="position:absolute;left:441px;top:564px;width:379px;height:32px;border:1px solid #dcdfe6;background:#fff"></div>
<div style="position:absolute;left:479px;top:564px;width:1px;height:34px;background:#dcdfe6"></div>
<div style="position:absolute;left:480px;top:564px;width:1px;height:34px;background:#eceef2"></div>
<div style="position:absolute;left:783px;top:564px;width:1px;height:34px;background:#dcdfe6"></div>
<div style="position:absolute;left:784px;top:564px;width:1px;height:34px;background:#dcdfe6"></div>
<svg style="position:absolute;left:454px;top:574px" width="13" height="13" viewBox="0 0 13 13" fill="none" stroke="none" color="#2f5a40"><path d="M6.5 0.3 L9.1 3 H3.9 Z M6.5 12.7 L9.1 10 H3.9 Z M0.3 6.5 L3 3.9 V9.1 Z M12.7 6.5 L10 3.9 V9.1 Z" fill="#555555" stroke="#555555" stroke-width="0.6" stroke-linejoin="round"/><path d="M6.5 2.5 V10.5 M2.5 6.5 H10.5" stroke="#555555" stroke-width="1.8"/></svg>
<div class="t" style="left:492px;top:572.40px;font-size:13px;color:#5e5e5e;">Legal Business Name</div>
<div style="position:absolute;left:796.7px;top:579.5px;width:11.8px;height:2.4px;background:#1c9c6c;border-radius:1.2px"></div>
<div style="position:absolute;left:801.4px;top:574.8px;width:2.4px;height:11.6px;background:#1c9c6c;border-radius:1.2px"></div>
<div style="position:absolute;left:851px;top:564px;width:379px;height:32px;border:1px solid #dcdfe6;background:#fff"></div>
<div style="position:absolute;left:889px;top:564px;width:1px;height:34px;background:#dcdfe6"></div>
<div style="position:absolute;left:890px;top:564px;width:1px;height:34px;background:#eceef2"></div>
<div style="position:absolute;left:1193px;top:564px;width:1px;height:34px;background:#dcdfe6"></div>
<div style="position:absolute;left:1194px;top:564px;width:1px;height:34px;background:#dcdfe6"></div>
<svg style="position:absolute;left:864px;top:574px" width="13" height="13" viewBox="0 0 13 13" fill="none" stroke="none" color="#2f5a40"><path d="M6.5 0.3 L9.1 3 H3.9 Z M6.5 12.7 L9.1 10 H3.9 Z M0.3 6.5 L3 3.9 V9.1 Z M12.7 6.5 L10 3.9 V9.1 Z" fill="#555555" stroke="#555555" stroke-width="0.6" stroke-linejoin="round"/><path d="M6.5 2.5 V10.5 M2.5 6.5 H10.5" stroke="#555555" stroke-width="1.8"/></svg>
<div class="t" style="left:902px;top:572.40px;font-size:13px;color:#5e5e5e;">Loan Amount</div>
<div style="position:absolute;left:1206.7px;top:579.5px;width:11.8px;height:2.4px;background:#1c9c6c;border-radius:1.2px"></div>
<div style="position:absolute;left:1211.4px;top:574.8px;width:2.4px;height:11.6px;background:#1c9c6c;border-radius:1.2px"></div>
<div style="position:absolute;left:1261px;top:564px;width:379px;height:32px;border:1px solid #dcdfe6;background:#fff"></div>
<div style="position:absolute;left:1299px;top:564px;width:1px;height:34px;background:#dcdfe6"></div>
<div style="position:absolute;left:1300px;top:564px;width:1px;height:34px;background:#eceef2"></div>
<div style="position:absolute;left:1603px;top:564px;width:1px;height:34px;background:#dcdfe6"></div>
<div style="position:absolute;left:1604px;top:564px;width:1px;height:34px;background:#dcdfe6"></div>
<svg style="position:absolute;left:1274px;top:574px" width="13" height="13" viewBox="0 0 13 13" fill="none" stroke="none" color="#2f5a40"><path d="M6.5 0.3 L9.1 3 H3.9 Z M6.5 12.7 L9.1 10 H3.9 Z M0.3 6.5 L3 3.9 V9.1 Z M12.7 6.5 L10 3.9 V9.1 Z" fill="#555555" stroke="#555555" stroke-width="0.6" stroke-linejoin="round"/><path d="M6.5 2.5 V10.5 M2.5 6.5 H10.5" stroke="#555555" stroke-width="1.8"/></svg>
<div class="t" style="left:1312px;top:572.40px;font-size:13px;color:#5e5e5e;">Monthly Card Sales</div>
<div style="position:absolute;left:1616.7px;top:579.5px;width:11.8px;height:2.4px;background:#1c9c6c;border-radius:1.2px"></div>
<div style="position:absolute;left:1621.4px;top:574.8px;width:2.4px;height:11.6px;background:#1c9c6c;border-radius:1.2px"></div>
<div style="position:absolute;left:32px;top:611px;width:379px;height:32px;border:1px solid #dcdfe6;background:#fff"></div>
<div style="position:absolute;left:70px;top:611px;width:1px;height:34px;background:#dcdfe6"></div>
<div style="position:absolute;left:71px;top:611px;width:1px;height:34px;background:#eceef2"></div>
<div style="position:absolute;left:374px;top:611px;width:1px;height:34px;background:#dcdfe6"></div>
<div style="position:absolute;left:375px;top:611px;width:1px;height:34px;background:#dcdfe6"></div>
<svg style="position:absolute;left:45px;top:621px" width="13" height="13" viewBox="0 0 13 13" fill="none" stroke="none" color="#2f5a40"><path d="M6.5 0.3 L9.1 3 H3.9 Z M6.5 12.7 L9.1 10 H3.9 Z M0.3 6.5 L3 3.9 V9.1 Z M12.7 6.5 L10 3.9 V9.1 Z" fill="#555555" stroke="#555555" stroke-width="0.6" stroke-linejoin="round"/><path d="M6.5 2.5 V10.5 M2.5 6.5 H10.5" stroke="#555555" stroke-width="1.8"/></svg>
<div class="t" style="left:83px;top:619.40px;font-size:13px;color:#5e5e5e;">Monthly Gross Sales</div>
<div style="position:absolute;left:387.7px;top:626.5px;width:11.8px;height:2.4px;background:#1c9c6c;border-radius:1.2px"></div>
<div style="position:absolute;left:392.4px;top:621.8px;width:2.4px;height:11.6px;background:#1c9c6c;border-radius:1.2px"></div>
<div style="position:absolute;left:441px;top:611px;width:379px;height:32px;border:1px solid #dcdfe6;background:#fff"></div>
<div style="position:absolute;left:479px;top:611px;width:1px;height:34px;background:#dcdfe6"></div>
<div style="position:absolute;left:480px;top:611px;width:1px;height:34px;background:#eceef2"></div>
<div style="position:absolute;left:783px;top:611px;width:1px;height:34px;background:#dcdfe6"></div>
<div style="position:absolute;left:784px;top:611px;width:1px;height:34px;background:#dcdfe6"></div>
<svg style="position:absolute;left:454px;top:621px" width="13" height="13" viewBox="0 0 13 13" fill="none" stroke="none" color="#2f5a40"><path d="M6.5 0.3 L9.1 3 H3.9 Z M6.5 12.7 L9.1 10 H3.9 Z M0.3 6.5 L3 3.9 V9.1 Z M12.7 6.5 L10 3.9 V9.1 Z" fill="#555555" stroke="#555555" stroke-width="0.6" stroke-linejoin="round"/><path d="M6.5 2.5 V10.5 M2.5 6.5 H10.5" stroke="#555555" stroke-width="1.8"/></svg>
<div class="t" style="left:492px;top:619.40px;font-size:13px;color:#5e5e5e;">Months In Business</div>
<div style="position:absolute;left:796.7px;top:626.5px;width:11.8px;height:2.4px;background:#1c9c6c;border-radius:1.2px"></div>
<div style="position:absolute;left:801.4px;top:621.8px;width:2.4px;height:11.6px;background:#1c9c6c;border-radius:1.2px"></div>
<div style="position:absolute;left:851px;top:611px;width:379px;height:32px;border:1px solid #dcdfe6;background:#fff"></div>
<div style="position:absolute;left:889px;top:611px;width:1px;height:34px;background:#dcdfe6"></div>
<div style="position:absolute;left:890px;top:611px;width:1px;height:34px;background:#eceef2"></div>
<div style="position:absolute;left:1193px;top:611px;width:1px;height:34px;background:#dcdfe6"></div>
<div style="position:absolute;left:1194px;top:611px;width:1px;height:34px;background:#dcdfe6"></div>
<svg style="position:absolute;left:864px;top:621px" width="13" height="13" viewBox="0 0 13 13" fill="none" stroke="none" color="#2f5a40"><path d="M6.5 0.3 L9.1 3 H3.9 Z M6.5 12.7 L9.1 10 H3.9 Z M0.3 6.5 L3 3.9 V9.1 Z M12.7 6.5 L10 3.9 V9.1 Z" fill="#555555" stroke="#555555" stroke-width="0.6" stroke-linejoin="round"/><path d="M6.5 2.5 V10.5 M2.5 6.5 H10.5" stroke="#555555" stroke-width="1.8"/></svg>
<div class="t" style="left:902px;top:619.40px;font-size:13px;color:#5e5e5e;">Phone Number</div>
<div style="position:absolute;left:1206.7px;top:626.5px;width:11.8px;height:2.4px;background:#1c9c6c;border-radius:1.2px"></div>
<div style="position:absolute;left:1211.4px;top:621.8px;width:2.4px;height:11.6px;background:#1c9c6c;border-radius:1.2px"></div>
<div style="position:absolute;left:1261px;top:611px;width:379px;height:32px;border:1px solid #dcdfe6;background:#fff"></div>
<div style="position:absolute;left:1299px;top:611px;width:1px;height:34px;background:#dcdfe6"></div>
<div style="position:absolute;left:1300px;top:611px;width:1px;height:34px;background:#eceef2"></div>
<div style="position:absolute;left:1603px;top:611px;width:1px;height:34px;background:#dcdfe6"></div>
<div style="position:absolute;left:1604px;top:611px;width:1px;height:34px;background:#dcdfe6"></div>
<svg style="position:absolute;left:1274px;top:621px" width="13" height="13" viewBox="0 0 13 13" fill="none" stroke="none" color="#2f5a40"><path d="M6.5 0.3 L9.1 3 H3.9 Z M6.5 12.7 L9.1 10 H3.9 Z M0.3 6.5 L3 3.9 V9.1 Z M12.7 6.5 L10 3.9 V9.1 Z" fill="#555555" stroke="#555555" stroke-width="0.6" stroke-linejoin="round"/><path d="M6.5 2.5 V10.5 M2.5 6.5 H10.5" stroke="#555555" stroke-width="1.8"/></svg>
<div class="t" style="left:1312px;top:619.40px;font-size:13px;color:#5e5e5e;">Year In Business</div>
<div style="position:absolute;left:1616.7px;top:626.5px;width:11.8px;height:2.4px;background:#1c9c6c;border-radius:1.2px"></div>
<div style="position:absolute;left:1621.4px;top:621.8px;width:2.4px;height:11.6px;background:#1c9c6c;border-radius:1.2px"></div>
<div style="position:absolute;left:32px;top:659px;width:379px;height:32px;border:1px solid #dcdfe6;background:#fff"></div>
<div style="position:absolute;left:70px;top:659px;width:1px;height:34px;background:#dcdfe6"></div>
<div style="position:absolute;left:71px;top:659px;width:1px;height:34px;background:#eceef2"></div>
<div style="position:absolute;left:374px;top:659px;width:1px;height:34px;background:#dcdfe6"></div>
<div style="position:absolute;left:375px;top:659px;width:1px;height:34px;background:#dcdfe6"></div>
<svg style="position:absolute;left:45px;top:669px" width="13" height="13" viewBox="0 0 13 13" fill="none" stroke="none" color="#2f5a40"><path d="M6.5 0.3 L9.1 3 H3.9 Z M6.5 12.7 L9.1 10 H3.9 Z M0.3 6.5 L3 3.9 V9.1 Z M12.7 6.5 L10 3.9 V9.1 Z" fill="#555555" stroke="#555555" stroke-width="0.6" stroke-linejoin="round"/><path d="M6.5 2.5 V10.5 M2.5 6.5 H10.5" stroke="#555555" stroke-width="1.8"/></svg>
<div class="t" style="left:83px;top:667.40px;font-size:13px;color:#5e5e5e;">Zip</div>
<div style="position:absolute;left:387.7px;top:674.5px;width:11.8px;height:2.4px;background:#1c9c6c;border-radius:1.2px"></div>
<div style="position:absolute;left:392.4px;top:669.8px;width:2.4px;height:11.6px;background:#1c9c6c;border-radius:1.2px"></div>
<div style="position:absolute;left:33px;top:707px;width:52px;height:30px;background:#3a5e48;border:1px solid #325540;border-radius:1px"></div>
<div class="t" style="left:46.2px;top:712.90px;font-size:13px;color:#fff;transform:scaleX(0.94);transform-origin:0 0;">Save</div>
</div>
</body></html>
